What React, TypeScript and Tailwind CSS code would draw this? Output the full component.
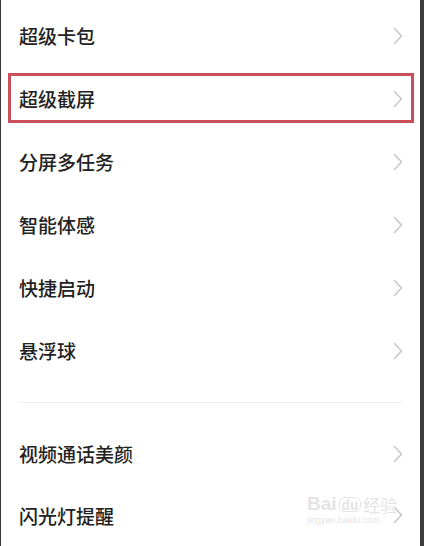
import React from "react";

const Chevron = () => (
  <svg width="10" height="18" viewBox="0 0 10 18" fill="none" className="shrink-0">
    <path d="M1.5 1.5 L8.5 9 L1.5 16.5" stroke="#c9c9c9" strokeWidth="1.6" strokeLinecap="round" strokeLinejoin="round" />
  </svg>
);

const Row = ({ label, highlight }: { label: string; highlight?: boolean }) => (
  <div className="relative flex h-[63px] items-center justify-between pl-[18px] pr-[17px]">
    <span className="text-[19px] font-medium leading-none text-[#222222]">{label}</span>
    <Chevron />
    {highlight && (
      <div className="pointer-events-none absolute left-[7px] right-[6px] top-[6px] bottom-[7px] border-[3px] border-[#c9505a]" />
    )}
  </div>
);

export default function App() {
  return (
    <div
      className="relative flex h-[546px] w-[424px] flex-col overflow-hidden border-l border-r-4 border-l-[#3a3a3a] border-r-[#3c3c3c] bg-white"
      style={{ fontFamily: '"Noto Sans CJK SC", "Noto Sans", sans-serif' }}
    >
      <div className="pt-[4px]">
        <Row label="超级卡包" />
        <Row label="超级截屏" highlight />
        <Row label="分屏多任务" />
        <Row label="智能体感" />
        <Row label="快捷启动" />
        <Row label="悬浮球" />
      </div>
      <div className="mx-[18px] mt-[20px] mb-[20px] h-px bg-[#efefef]" />
      <Row label="视频通话美颜" />
      <Row label="闪光灯提醒" />

      <div className="pointer-events-none absolute left-[306px] top-[494px] flex flex-col items-start leading-none text-[#e4e4e4]">
        <div className="flex items-end gap-[2px]">
          <span className="text-[19px] font-bold" style={{ fontFamily: '"Liberation Sans", sans-serif' }}>Bai</span>
          <span className="mb-[1px] rounded-[6px] border border-[#e4e4e4] px-[2px] text-[13px] font-bold">du</span>
          <span className="text-[17px]">经验</span>
        </div>
        <span className="mt-[3px] text-[9px]" style={{ fontFamily: '"Liberation Sans", sans-serif' }}>jingyan.baidu.com</span>
      </div>
    </div>
  );
}
